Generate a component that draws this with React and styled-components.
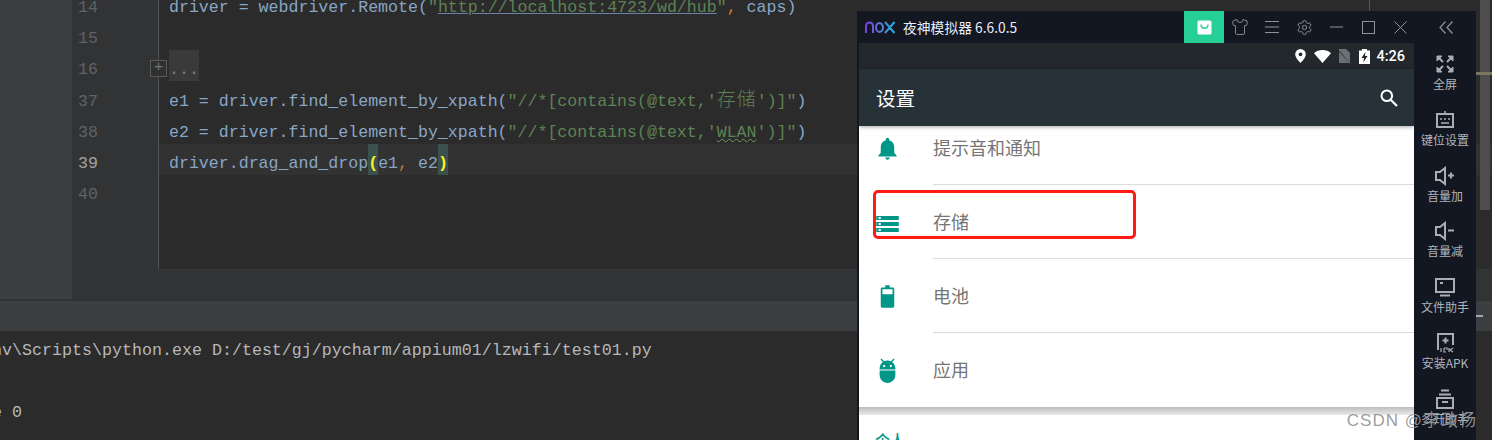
import React from 'react'
import styled, { createGlobalStyle } from 'styled-components'
import { Shirt, Settings } from 'lucide-react'

const GlobalStyle = createGlobalStyle`
    html, body { margin: 0; padding: 0; background: #2b2b2b; }
    * { box-sizing: border-box; }
`

const Page = styled.div`
    position: relative;
    width: 1492px;
    height: 440px;
    overflow: hidden;
    display: flex;
    flex-direction: column;
    background: #2b2b2b;
    font-family: "Liberation Mono", "Noto Sans CJK SC", monospace;
`

const TopArea = styled.div`
    display: flex;
    height: 299px;
    flex: none;
`

const SideStrip = styled.div`
    width: 72px;
    flex: none;
    background: #3c3f41;
`

const EditorColumn = styled.div`
    flex: 1;
    display: flex;
    flex-direction: column;
    min-width: 0;
`

const Editor = styled.div`
    position: relative;
    height: 270px;
    flex: none;
    display: flex;
    overflow: hidden;
    border-bottom: 1px solid #333536;
`

const Gutter = styled.div`
    width: 87px;
    flex: none;
    background: #313335;
    border-right: 1px solid #555;
    position: relative;
`

const LineNumber = styled.div`
    height: 31.2px;
    line-height: 39px;
    padding-left: 6px;
    font-size: 16.6px;
    color: ${props => props.$current ? '#a4a3a3' : '#606366'};
    &:first-child { margin-top: -12px; }
`

const FoldBox = styled.div`
    position: absolute;
    left: 78px;
    top: 60px;
    width: 17px;
    height: 17px;
    border: 1px solid #5a5a5a;
    background: #2f3031;
    color: #777;
    font-size: 15px;
    line-height: 14px;
    text-align: center;
`

const Code = styled.div`
    flex: 1;
    min-width: 0;
`

const CodeLine = styled.div`
    height: 31.2px;
    line-height: 39px;
    padding-left: 10px;
    font-size: 16.6px;
    white-space: pre;
    color: #88a6c6;
    background: ${props => props.$current ? '#323232' : 'transparent'};
    &:first-child { margin-top: -12px; }
`

const Str = styled.span`
    color: #5f8254;
`

const Url = styled.span`
    color: #5f8254;
    text-decoration: underline;
    text-decoration-color: #6a82a8;
`

const Wavy = styled.span`
    color: #5f8254;
    text-decoration: underline wavy #6f9a58;
    text-decoration-thickness: 1px;
`

const Cjk = styled.span`
    display: inline-block;
    width: 40px;
    font-size: 19px;
    line-height: 20px;
    letter-spacing: 1px;
    font-weight: 300;
    color: #5f8254;
`

const Comma = styled.span`
    color: #cc7832;
`

const Collapsed = styled.span`
    display: inline-block;
    width: 30px;
    height: 31px;
    background: #3a3a3a;
    color: #808080;
    vertical-align: top;
`

const Brace = styled.span`
    display: inline-block;
    height: 31.2px;
    background: #3b514d;
    color: #ffef28;
    font-weight: bold;
    vertical-align: top;
`

const MarginGuide = styled.div`
    position: absolute;
    left: 1297px;
    top: 0;
    bottom: 0;
    width: 1px;
    background: #555;
`

const ScrollThumb = styled.div`
    position: absolute;
    left: 1408px;
    top: 0;
    width: 10px;
    height: 210px;
    background: #4d4d4d;
`

const ScrollMark = styled.div`
    position: absolute;
    left: 1404px;
    top: 72px;
    width: 16px;
    height: 3px;
    background: #7a7461;
`

const HScrollBar = styled.div`
    flex: 1;
    background: #313335;
`

const ToolBar = styled.div`
    position: relative;
    height: 32px;
    flex: none;
    background: #3c3f41;
    border-top: 2px solid #323232;
`

const ToolMinus = styled.div`
    position: absolute;
    right: 9px;
    top: 14px;
    width: 7px;
    height: 2px;
    background: #a8a8a8;
`

const Console = styled.div`
    flex: 1;
    padding-top: 4px;
    margin-left: -8px;
    background: #2b2b2b;
`

const ConsoleLine = styled.div`
    height: 31px;
    line-height: 31px;
    font-size: 16.67px;
    white-space: pre;
    color: #b4b8bc;
`

const EmuWindow = styled.div`
    position: absolute;
    left: 857px;
    top: 11px;
    width: 619px;
    height: 429px;
    display: flex;
    flex-direction: column;
    background: #131722;
    font-family: "Noto Sans CJK SC", "Noto Sans", sans-serif;
`

const TitleBar = styled.div`
    height: 32px;
    flex: none;
    display: flex;
    align-items: center;
`

const LogoWrap = styled.div`
    width: 46px;
    flex: none;
    padding-left: 8px;
    display: flex;
    align-items: center;
`

const WindowTitle = styled.div`
    flex: 1;
    font-size: 13.8px;
    color: #e6eefc;
    white-space: nowrap;
`

const BagButton = styled.div`
    width: 40px;
    height: 32px;
    flex: none;
    display: flex;
    align-items: center;
    justify-content: center;
    background: #26cf95;
`

const TitleButton = styled.div`
    width: ${props => props.$wide ? '60px' : '32px'};
    height: 32px;
    flex: none;
    display: flex;
    align-items: center;
    justify-content: center;
    color: #8d929c;
`

const EmuBody = styled.div`
    flex: 1;
    display: flex;
    min-height: 0;
    padding-left: 2px;
`

const Phone = styled.div`
    position: relative;
    width: 555px;
    flex: none;
    display: flex;
    flex-direction: column;
    background: #fff;
    overflow: hidden;
`

const StatusBar = styled.div`
    height: 26px;
    flex: none;
    display: flex;
    align-items: center;
    justify-content: flex-end;
    gap: 7.5px;
    padding-right: 9px;
    background: #22282b;
`

const Clock = styled.span`
    margin-left: -1px;
    font-family: "Roboto", sans-serif;
    font-size: 14.5px;
    font-weight: 500;
    color: #fff;
`

const AppBar = styled.div`
    position: relative;
    z-index: 2;
    height: 57px;
    flex: none;
    display: flex;
    align-items: center;
    justify-content: space-between;
    padding: 0 16px 0 17px;
    background: #263238;
    color: #fff;
    font-size: 19.5px;
    box-shadow: 0 1px 4px rgba(0, 0, 0, 0.35);
`

const List = styled.div`
    flex: 1;
    min-height: 0;
    overflow: hidden;
`

const Row = styled.div`
    height: 74px;
    display: flex;
    align-items: center;
    padding-left: 15px;
    &:first-child { margin-top: -15px; }
`

const RowIcon = styled.svg`
    width: 27px;
    height: ${props => props.$squat ? '24px' : '27px'};
    margin-top: ${props => props.$squat ? '4px' : '0'};
    flex: none;
    fill: #009688;
    fill-rule: evenodd;
`

const RowText = styled.div`
    align-self: stretch;
    flex: 1;
    margin-left: 32px;
    padding-bottom: 2px;
    display: flex;
    align-items: center;
    font-size: 18px;
    color: #757575;
    border-bottom: ${props => props.$last ? 'none' : '1px solid #dcdcdc'};
`

const SectionGap = styled.div`
    height: 8px;
    background: linear-gradient(#bdbdbd, #e9e9e9);
`

const SectionTitle = styled.div`
    padding: 15px 0 0 16px;
    font-size: 15px;
    line-height: 20px;
    font-weight: 500;
    color: #009688;
`

const SideBar = styled.div`
    flex: 1;
    display: flex;
    flex-direction: column;
    padding-top: 11px;
    background: #131722;
`

const SideItem = styled.div`
    height: 55.8px;
    flex: none;
    display: flex;
    flex-direction: column;
    align-items: center;
    color: #a9adb5;
`

const SideLabel = styled.div`
    margin-top: 2px;
    font-size: 12px;
    line-height: 16px;
    color: #b0b4bb;
    white-space: nowrap;
`

const RedBox = styled.div`
    position: absolute;
    left: 14px;
    top: 147px;
    width: 263px;
    height: 49px;
    border: 3px solid #ff1a14;
    border-radius: 5px;
`

const Watermark = styled.div`
    position: absolute;
    right: 15px;
    top: 409px;
    font-family: "Liberation Sans", "Noto Sans CJK SC", sans-serif;
    font-size: 17px;
    letter-spacing: 1px;
    line-height: 24px;
    color: rgba(150, 150, 150, 0.95);
    white-space: nowrap;
`

const NoxLogo = () => (
    <svg width="31" height="13" viewBox="0 0 31 13" fill="none" strokeWidth="2">
        <defs>
            <linearGradient id="noxGrad" x1="0" y1="0" x2="31" y2="0" gradientUnits="userSpaceOnUse">
                <stop offset="0" stopColor="#7b3fe4" />
                <stop offset="0.5" stopColor="#5a78d8" />
                <stop offset="1" stopColor="#19b6e0" />
            </linearGradient>
        </defs>
        <path d="M1 12V5a3.5 3.5 0 0 1 7 0v7M11 6.5a3.5 4.5 0 1 1 7 0a3.5 4.5 0 1 1 -7 0M20 1l9.5 11M29.5 1L20 12" stroke="url(#noxGrad)" />
    </svg>
)

const BagIcon = () => (
    <svg width="15" height="15" viewBox="0 0 15 15">
        <rect x="0.5" y="0.5" width="14" height="14" rx="1.5" fill="#fff" />
        <path d="M4 4.5c0 5 7 5 7 0" fill="none" stroke="#26cf95" strokeWidth="1.4" />
    </svg>
)

const MenuIcon = () => (
    <svg width="14" height="12" viewBox="0 0 14 12" stroke="currentColor">
        <path d="M0 .5h14M0 6h14M0 11.5h14" />
    </svg>
)

const MinIcon = () => (
    <svg width="13" height="2" viewBox="0 0 13 2" stroke="currentColor">
        <path d="M0 1h13" />
    </svg>
)

const MaxIcon = () => (
    <svg width="13" height="13" viewBox="0 0 13 13" fill="none" stroke="currentColor">
        <rect x="0.5" y="0.5" width="12" height="12" />
    </svg>
)

const CloseIcon = () => (
    <svg width="13" height="13" viewBox="0 0 13 13" stroke="currentColor">
        <path d="M.5.5l12 12M12.5.5l-12 12" />
    </svg>
)

const ChevronsIcon = () => (
    <svg width="14" height="13" viewBox="0 0 14 13" fill="none" stroke="currentColor" strokeWidth="1.2">
        <path d="M6.5.5L1 6.5l5.5 6M13.5.5L8 6.5l5.5 6" />
    </svg>
)

const PinIcon = () => (
    <svg width="11" height="14" viewBox="0 0 11 14">
        <path fillRule="evenodd" fill="#fff" d="M5.5 0A5.3 5.3 0 0 0 .2 5.3C.2 9 5.5 14 5.5 14s5.3-5 5.3-8.7A5.3 5.3 0 0 0 5.5 0zm0 7.2a1.9 1.9 0 1 1 0-3.8 1.9 1.9 0 0 1 0 3.8z" />
    </svg>
)

const WifiIcon = () => (
    <svg width="17" height="13" viewBox="0 0 17 13">
        <path fill="#fff" d="M8.5 13L0 3.2C2.2 1.2 5.2 0 8.5 0s6.3 1.2 8.5 3.2z" />
    </svg>
)

const SimIcon = () => (
    <svg width="13" height="15" viewBox="0 0 13 15">
        <path fill="#6c7073" d="M1 0h7l4 4v10H1z" />
        <path stroke="#22282b" strokeWidth="1" d="M0 1l13 14" />
        <path stroke="#6c7073" strokeWidth="1" d="M1 0l11.5 14.5" />
    </svg>
)

const BatteryIcon = () => (
    <svg width="11" height="15" viewBox="0 0 11 15">
        <path fill="#fff" d="M3 0h5v1.5h3V15H0V1.5h3z" />
        <path fill="#22282b" d="M6.5 3L2.5 9h2.5l-.7 4.5 4.2-6.500H6z" />
    </svg>
)

const SearchIcon = () => (
    <svg width="18" height="18" viewBox="0 0 18 18" fill="none" stroke="#fff" strokeWidth="2">
        <circle cx="6.8" cy="6.8" r="5.3" />
        <path d="M10.5 10.5l6.5 6.5" strokeWidth="2.2" />
    </svg>
)

const FullIcon = () => (
    <svg width="20" height="20" viewBox="0 0 20 20" fill="currentColor" stroke="currentColor">
        <path d="M2 2h5L2 7zM18 2h-5l5 5zM2 18h5l-5-5zM18 18h-5l5-5z" />
        <path d="M3 3l5 5M17 3l-5 5M3 17l5-5M17 17l-5-5" strokeWidth="2" />
    </svg>
)

const KeyIcon = () => (
    <svg width="20" height="20" viewBox="0 0 20 20" fill="none" stroke="currentColor" strokeWidth="2">
        <rect x="2" y="4" width="16" height="13" />
        <path d="M10 4V1M5 9h2M9 9h2M13 9h2M6 13h8" strokeWidth="1.6" />
    </svg>
)

const SpeakerIcon = ({ plus }) => (
    <svg width="20" height="20" viewBox="0 0 20 20" fill="none" stroke="currentColor" strokeWidth="2">
        <path d="M1 6h4l5-4v16l-5-4H1z" />
        <path d={plus ? 'M13 9.5h6M16 6.5v6' : 'M13 9.5h6'} />
    </svg>
)

const MonitorIcon = () => (
    <svg width="20" height="20" viewBox="0 0 20 20" fill="none" stroke="currentColor" strokeWidth="2">
        <rect x="1" y="2" width="18" height="13" />
        <path d="M5 18.5h10M5 6h3" />
    </svg>
)

const ApkIcon = () => (
    <svg width="20" height="20" viewBox="0 0 20 20" fill="none" stroke="currentColor" strokeWidth="2">
        <path d="M3 17V1h15v11M10.5 4.5v6M7.5 7.5h6" />
        <path d="M6 15v4M9 15v4h2M9 15h3v2M14 15v4M18 15l-3 2 3 2" strokeWidth="1.2" />
    </svg>
)

const BoxIcon = () => (
    <svg width="20" height="20" viewBox="0 0 20 20" fill="none" stroke="currentColor" strokeWidth="2">
        <path d="M6 1.5h8M4 5.5h12" />
        <rect x="2" y="9" width="16" height="10" />
        <path d="M7 13h6" />
    </svg>
)

const sideItems = [
    { label: '全屏', icon: <FullIcon /> },
    { label: '键位设置', icon: <KeyIcon /> },
    { label: '音量加', icon: <SpeakerIcon plus /> },
    { label: '音量减', icon: <SpeakerIcon /> },
    { label: '文件助手', icon: <MonitorIcon /> },
    { label: '安装APK', icon: <ApkIcon /> },
    { label: '多开助手', icon: <BoxIcon /> },
]

const rows = [
    {
        label: '提示音和通知',
        path: 'M12 22c1.1 0 2-.9 2-2h-4c0 1.1.9 2 2 2zm6-6v-5c0-3.07-1.63-5.64-4.5-6.32V4c0-.83-.67-1.5-1.5-1.5s-1.5.67-1.5 1.5v.68C7.64 5.36 6 7.92 6 11v5l-2 2v1h16v-1l-2-2z',
    },
    {
        label: '存储',
        squat: true,
        path: 'M2 20h20v-4H2v4zm2-3h2v2H4v-2zM2 4v4h20V4H2zm4 3H4V5h2v2zm-4 7h20v-4H2v4zm2-3h2v2H4v-2z',
    },
    {
        label: '电池',
        path: 'M16.7 4H14V2h-4v2H7.3C6.6 4 6 4.6 6 5.3v15.4C6 21.4 6.6 22 7.3 22h9.4c.7 0 1.3-.6 1.3-1.3V5.3C18 4.6 17.4 4 16.7 4z M7.5 5.5h9V10h-9z',
    },
    {
        label: '应用',
        path: 'M5 16c0 3.87 3.13 7 7 7s7-3.13 7-7v-4H5v4zM16.12 4.37l2.1-2.1-.82-.83-2.3 2.31C14.16 3.28 13.12 3 12 3s-2.16.28-3.09.75L6.6 1.44l-.82.83 2.1 2.1C6.14 5.64 5 7.68 5 10v1h14v-1c0-2.32-1.14-4.36-2.88-5.63zM9 9c-.55 0-1-.45-1-1s.45-1 1-1 1 .45 1 1-.45 1-1 1zm6 0c-.55 0-1-.45-1-1s.45-1 1-1 1 .45 1 1-.45 1-1 1z',
    },
]

const lineNumbers = [14, 15, 16, 37, 38, 39, 40]

const App = () => {
    return (
        <Page>
            <GlobalStyle />
            <TopArea>
                <SideStrip />
                <EditorColumn>
                    <Editor>
                        <Gutter>
                            {lineNumbers.map(n => (
                                <LineNumber key={n} $current={n === 39}>{n}</LineNumber>
                            ))}
                            <FoldBox>+</FoldBox>
                        </Gutter>
                        <Code>
                            <CodeLine>driver = webdriver.Remote(<Str>"</Str><Url>http://localhost:4723/wd/hub</Url><Str>"</Str><Comma>,</Comma> caps)</CodeLine>
                            <CodeLine />
                            <CodeLine><Collapsed>...</Collapsed></CodeLine>
                            <CodeLine>e1 = driver.find_element_by_xpath(<Str>"//*[contains(@text,'<Cjk>存储</Cjk>')]"</Str>)</CodeLine>
                            <CodeLine>e2 = driver.find_element_by_xpath(<Str>"//*[contains(@text,'<Wavy>WLAN</Wavy>')]"</Str>)</CodeLine>
                            <CodeLine $current>driver.drag_and_drop<Brace>(</Brace>e1<Comma>,</Comma> e2<Brace>)</Brace></CodeLine>
                            <CodeLine />
                        </Code>
                        <MarginGuide />
                        <ScrollThumb />
                        <ScrollMark />
                    </Editor>
                    <HScrollBar />
                </EditorColumn>
            </TopArea>
            <ToolBar>
                <ToolMinus />
            </ToolBar>
            <Console>
                <ConsoleLine>nv\Scripts\python.exe D:/test/gj/pycharm/appium01/lzwifi/test01.py</ConsoleLine>
                <ConsoleLine />
                <ConsoleLine>e 0</ConsoleLine>
            </Console>

            <EmuWindow>
                <TitleBar>
                    <LogoWrap><NoxLogo /></LogoWrap>
                    <WindowTitle>夜神模拟器 6.6.0.5</WindowTitle>
                    <BagButton><BagIcon /></BagButton>
                    <TitleButton><Shirt size={18} strokeWidth={1.2} /></TitleButton>
                    <TitleButton><MenuIcon /></TitleButton>
                    <TitleButton><Settings size={17} strokeWidth={1.4} /></TitleButton>
                    <TitleButton><MinIcon /></TitleButton>
                    <TitleButton><MaxIcon /></TitleButton>
                    <TitleButton><CloseIcon /></TitleButton>
                    <TitleButton $wide><ChevronsIcon /></TitleButton>
                </TitleBar>
                <EmuBody>
                    <Phone>
                        <StatusBar>
                            <PinIcon />
                            <WifiIcon />
                            <SimIcon />
                            <BatteryIcon />
                            <Clock>4:26</Clock>
                        </StatusBar>
                        <AppBar>
                            设置
                            <SearchIcon />
                        </AppBar>
                        <List>
                            {rows.map((row, i) => (
                                <Row key={row.label}>
                                    <RowIcon viewBox="0 0 24 24" preserveAspectRatio="none" $squat={row.squat}><path d={row.path} /></RowIcon>
                                    <RowText $last={i === rows.length - 1}>{row.label}</RowText>
                                </Row>
                            ))}
                            <SectionGap />
                            <SectionTitle>个人</SectionTitle>
                        </List>
                        <RedBox />
                    </Phone>
                    <SideBar>
                        {sideItems.map(item => (
                            <SideItem key={item.label}>
                                {item.icon}
                                <SideLabel>{item.label}</SideLabel>
                            </SideItem>
                        ))}
                    </SideBar>
                </EmuBody>
            </EmuWindow>
            <Watermark>CSDN @李政杨</Watermark>
        </Page>
    )
}

export default App
